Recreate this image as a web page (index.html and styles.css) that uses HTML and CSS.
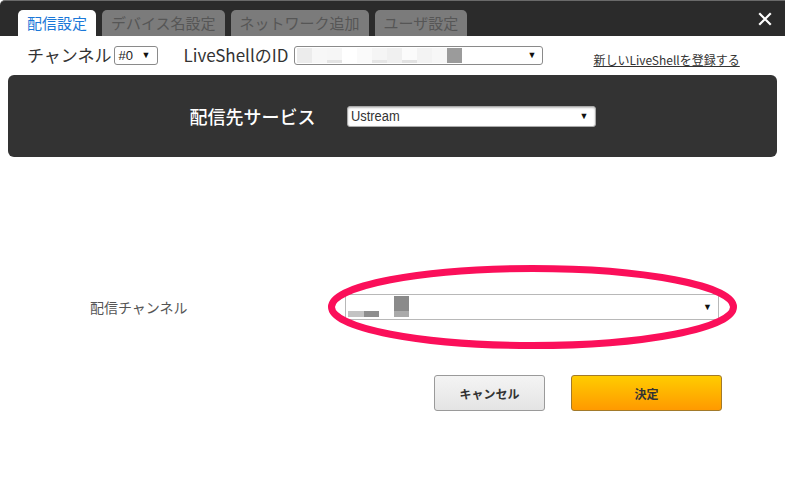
FILE: index.html
```html
<!DOCTYPE html>
<html lang="ja">
<head>
<meta charset="utf-8">
<link rel="stylesheet" href="styles.css">
</head>
<body>
<div class="dialog">
  <div class="header">
    <div class="tabs">
      <div class="tab active">配信設定</div>
      <div class="tab">デバイス名設定</div>
      <div class="tab">ネットワーク追加</div>
      <div class="tab">ユーザ設定</div>
    </div>
    <svg class="close" width="14" height="14" viewBox="0 0 14 14"><path d="M2 2 L12 12 M12 2 L2 12" stroke="#fff" stroke-width="2.2" stroke-linecap="square"/></svg>
  </div>

  <div class="toprow">
    <span class="lbl">チャンネル</span>
    <div class="sel sel-ch"><span>#0</span><span class="arr">▼</span></div>
    <span class="lbl lbl-id">LiveShellのID</span>
    <div class="sel sel-id">
      <div class="mosaic">
        <i class="m1"></i><i class="m2"></i><i class="m3"></i><i class="m4"></i><i class="m5"></i><i class="m6"></i><i class="m7"></i><i class="m8"></i><i class="m9"></i><i class="m10"></i><i class="m11"></i>
      </div>
      <span class="arr">▼</span>
    </div>
    <a class="reg" href="#">新しいLiveShellを登録する</a>
  </div>

  <div class="panel">
    <span class="plabel">配信先サービス</span>
    <div class="sel sel-svc"><span>Ustream</span><span class="arr">▼</span></div>
  </div>

  <div class="chrow">
    <span class="chlabel">配信チャンネル</span>
    <div class="sel sel-big">
      <div class="mosaic2">
        <i class="c1"></i><i class="c2"></i><i class="c3"></i>
      </div>
      <span class="arr">▼</span>
    </div>
    <svg class="ring" width="412" height="90" viewBox="0 0 412 90"><ellipse cx="204.5" cy="44" rx="201" ry="38.5" fill="none" stroke="#fb0f5a" stroke-width="7"/></svg>
  </div>

  <div class="btnrow">
    <button class="btn cancel">キャンセル</button>
    <button class="btn ok">決定</button>
  </div>
</div>
</body>
</html>
```

FILE: styles.css
```css
* { box-sizing: border-box; }
html, body { margin: 0; padding: 0; background: #fff; }
body {
  width: 785px;
  height: 502px;
  overflow: hidden;
  font-family: "Noto Sans CJK JP", "Noto Sans", "Liberation Sans", sans-serif;
  color: #333;
}
.dialog { width: 785px; height: 502px; background: #fff; }

.header {
  height: 36px;
  background: #2b2b2b;
  border-top: 1px solid #6a6a6a;
  border-radius: 5px 0 0 0;
  display: flex;
  align-items: flex-end;
  justify-content: space-between;
  padding-left: 18px;
  padding-right: 13px;
}
.tabs { display: flex; gap: 6px; align-items: flex-end; }
.tab {
  height: 26px;
  line-height: 26px;
  padding: 0 9px;
  font-size: 15px;
  border-radius: 5px 5px 0 0;
  background: #7b7b7b;
  color: #565656;
  white-space: nowrap;
}
.tab.active { background: #fff; color: #1b78d8; }
.close { align-self: center; }

.toprow {
  height: 36px;
  display: flex;
  align-items: center;
  padding-left: 27px;
  padding-top: 2px;
}
.lbl { font-size: 17px; color: #333; line-height: 20px; }
.lbl-id { margin-left: 26px; margin-right: 6px; }
.sel {
  display: flex;
  align-items: center;
  justify-content: space-between;
  background: #fff;
  border: 1px solid #8a8a8a;
  border-radius: 3px;
  font-family: "Liberation Sans", sans-serif;
  color: #222;
}
.arr { font-size: 9px; color: #111; }
.sel-ch {
  width: 44px; height: 19px;
  margin-left: 2px;
  padding: 0 6px 0 4px;
  font-size: 13px;
}
.sel-id {
  width: 249px; height: 19px;
  padding: 0 6px 0 2px;
}
.mosaic { display: flex; height: 15px; }
.mosaic i { display: block; width: 15px; height: 15px; background: #f4f4f4; }
.mosaic .m1 { background: #ececec; }
.mosaic .m2 { background: #f7f7f7; }
.mosaic .m3 { background: linear-gradient(#f6f6f6 80%, #e4e4e4 80%); }
.mosaic .m4 { background: #fff; }
.mosaic .m5 { background: #fafafa; }
.mosaic .m6 { background: linear-gradient(#f5f5f5 80%, #e6e6e6 80%); }
.mosaic .m7 { background: #f0f0f0; }
.mosaic .m8 { background: linear-gradient(#fbfbfb 80%, #e2e2e2 80%); }
.mosaic .m9 { background: #f3f3f3; }
.mosaic .m10 { background: #f7f7f7; }
.mosaic .m11 { background: #9b9b9b; }
.reg {
  margin-left: 50px;
  margin-top: 8px;
  font-size: 12px;
  color: #333;
  text-decoration: underline;
}

.panel {
  margin: 3px 8px 0 8px;
  height: 82px;
  background: #333;
  border-radius: 6px;
  display: flex;
  align-items: center;
  justify-content: center;
  gap: 31px;
}
.plabel { font-size: 18px; color: #fff; font-weight: 500; }
.sel-svc {
  width: 249px; height: 21px;
  border: 1px solid #aaa;
  border-radius: 3px;
  box-shadow: inset 0 1px 2px rgba(0,0,0,0.25);
  padding: 0 6px 0 3px;
  font-size: 14px;
  color: #333;
}
.sel-svc span:first-child { display: inline-block; transform: scaleX(0.92); transform-origin: left; }

.chrow {
  position: relative;
  margin-top: 137px;
  height: 26px;
  display: flex;
  align-items: center;
  padding-left: 90px;
}
.chlabel { width: 255px; font-size: 14px; color: #555; }
.sel-big {
  width: 374px; height: 26px;
  border: 1px solid #b8b8b8;
  border-radius: 0;
  padding: 0 6px 0 2px;
}
.mosaic2 { position: relative; width: 70px; height: 22px; }
.mosaic2 i { position: absolute; display: block; }
.mosaic2 .c1 { left: 0; top: 15px; width: 31px; height: 6px; background: linear-gradient(90deg, #c3c3c3 50%, #8e8e8e 50%); }
.mosaic2 .c2 { left: 46px; top: 0; width: 15px; height: 15px; background: #8a8a8a; }
.mosaic2 .c3 { left: 46px; top: 15px; width: 15px; height: 6px; background: #aaa; }
.ring { position: absolute; left: 328px; top: -31px; }

.btnrow {
  display: flex;
  gap: 26px;
  padding-left: 434px;
  margin-top: 55px;
}
.btn {
  height: 36px;
  border-radius: 3px;
  font-family: "Noto Sans CJK JP", sans-serif;
  font-size: 12px;
  font-weight: bold;
  color: #333;
  cursor: pointer;
}
.cancel {
  width: 111px;
  border: 1px solid #9a9a9a;
  background: linear-gradient(#f4f4f4, #e4e4e4);
}
.ok {
  width: 151px;
  border: 1px solid #a27a2a;
  background: linear-gradient(#ffcc00, #ff9900);
}
```
